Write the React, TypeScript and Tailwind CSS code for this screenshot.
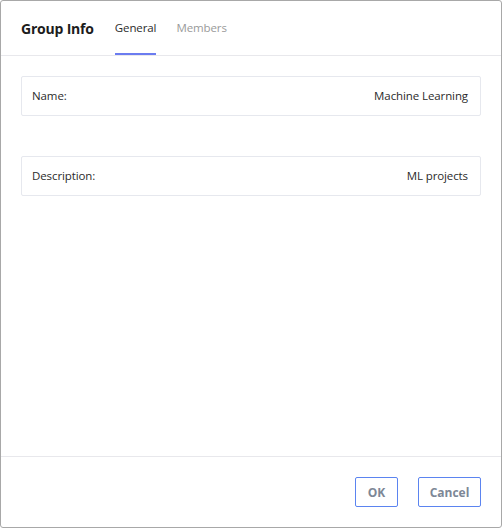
import React from 'react'

const fields = [
  { label: 'Name:', value: 'Machine Learning' },
  { label: 'Description:', value: 'ML projects' },
]

export default function App() {
  return (
    <div className="w-[502px] h-[528px] bg-white border border-[#a8a8a8] rounded-[3px] flex flex-col text-[#2b2b2b] font-['Open_Sans',sans-serif]">
      <div className="h-[55px] border-b border-[#e8e8ec] flex items-stretch px-[20px]">
        <div className="flex items-center text-[14px] font-bold text-[#1c1c1c] tracking-[-0.2px] mr-[21px]">Group Info</div>
        <div className="flex items-center text-[11.5px] border-b-2 border-[#6b7cf0] pt-[2px] tracking-[-0.1px]">General</div>
        <div className="flex items-center text-[11.5px] text-[#9a9a9a] ml-[20px] tracking-[-0.1px]">Members</div>
      </div>
      <div className="flex-1 px-[20px] pt-[20px] flex flex-col gap-[40px]">
        {fields.map((f) => (
          <div key={f.label} className="h-[40px] border border-[#e6e8ee] rounded-[2px] pl-[10px] pr-[12px] flex items-center justify-between text-[11.5px] tracking-[-0.1px]">
            <span>{f.label}</span>
            <span>{f.value}</span>
          </div>
        ))}
      </div>
      <div className="h-[71px] border-t border-[#e8e8ec] flex justify-end items-start gap-[20px] pt-[20px] pr-[20px]">
        <button className="h-[30px] w-[43px] border border-[#5b84f0] rounded-[2px] text-[12px] font-bold text-[#7d8796] pt-[1px]">OK</button>
        <button className="h-[30px] w-[63px] border border-[#5b84f0] rounded-[2px] text-[12px] font-bold text-[#7d8796] pt-[1px]">Cancel</button>
      </div>
    </div>
  )
}
